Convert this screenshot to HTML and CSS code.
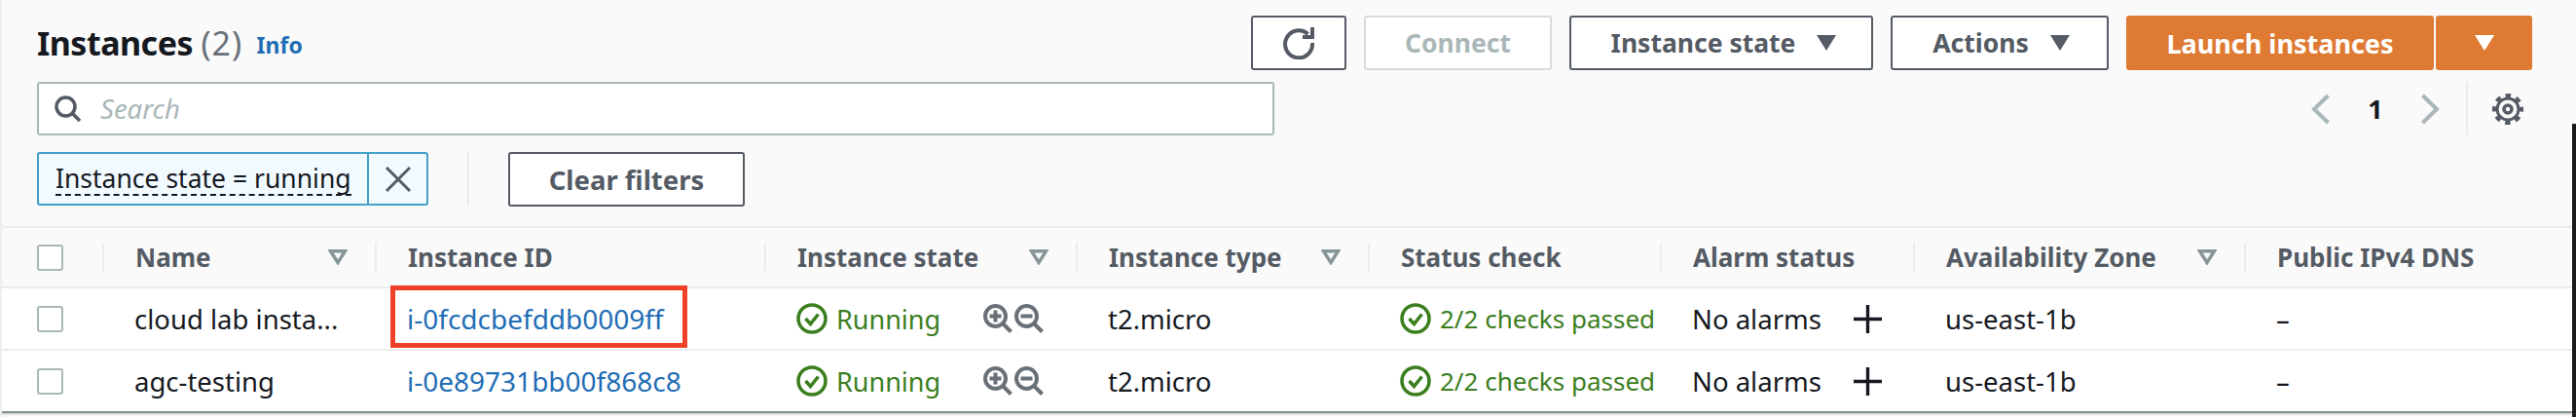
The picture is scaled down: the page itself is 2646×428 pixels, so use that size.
FILE: index.html
```html
<!DOCTYPE html>
<html lang="en">
<head>
    <meta charset="UTF-8">
    <title>Instances</title>
    <link rel="stylesheet" href="styles.css">
</head>
<body>
    <svg class="sprites" width="0" height="0">
        <symbol id="ok" viewBox="0 0 32 32">
            <circle cx="16" cy="16" r="14" fill="none" stroke="currentColor" stroke-width="3.500"/>
            <path d="M9.500 16l5 5.500 8-10" fill="none" stroke="currentColor" stroke-width="3.500"/>
        </symbol>
        <symbol id="sort" viewBox="0 0 20 16">
            <path d="M2.500 1.700h15L10 13.500z" fill="none" stroke="#879596" stroke-width="3.400"/>
        </symbol>
        <symbol id="zoom-in" viewBox="0 0 30 30">
            <circle cx="12.500" cy="12.500" r="10.500" fill="none" stroke="#687078" stroke-width="4"/>
            <path d="M20 20l8.500 8.500" stroke="#687078" stroke-width="4"/>
            <path d="M6.500 12.500h12M12.500 6.500v12" stroke="#687078" stroke-width="4"/>
        </symbol>
        <symbol id="zoom-out" viewBox="0 0 30 30">
            <circle cx="12.500" cy="12.500" r="10.500" fill="none" stroke="#687078" stroke-width="4"/>
            <path d="M20 20l8.500 8.500" stroke="#687078" stroke-width="4"/>
            <path d="M6.500 12.500h12" stroke="#687078" stroke-width="4"/>
        </symbol>
        <symbol id="plus" viewBox="0 0 30 30">
            <path d="M0 15h30M15 0v30" stroke="#16191f" stroke-width="3.500"/>
        </symbol>
    </svg>

    <section class="top">
        <div class="title-row">
            <h1>Instances <span class="count">(2)</span> <a class="info">Info</a></h1>
            <div class="actions">
                <button class="btn btn-icon">
                    <svg width="34" height="34" viewBox="0 0 34 34"><path d="M26.500 8A14 14 0 1 0 31 17" fill="none" stroke="currentColor" stroke-width="4"/><path d="M21 11h10V1" fill="none" stroke="currentColor" stroke-width="4"/></svg>
                </button>
                <button class="btn btn-off">Connect</button>
                <button class="btn btn-state">Instance state <i class="caret"></i></button>
                <button class="btn btn-actions">Actions <i class="caret"></i></button>
                <button class="btn btn-main">Launch instances</button>
                <button class="btn btn-main btn-split"><i class="caret"></i></button>
            </div>
        </div>

        <div class="search-row">
            <div class="search">
                <svg width="30" height="30" viewBox="0 0 30 30"><circle cx="12.500" cy="12.500" r="9.500" fill="none" stroke="#545b64" stroke-width="3.500"/><path d="M19 19l8 8" stroke="#545b64" stroke-width="3.500"/></svg>
                <span>Search</span>
            </div>
            <div class="pager">
                <svg width="22" height="32" viewBox="0 0 22 32"><path d="M18.500 2L4 16l14.500 14" fill="none" stroke="#aab7b8" stroke-width="4"/></svg>
                <span class="page">1</span>
                <svg width="22" height="32" viewBox="0 0 22 32"><path d="M3.500 2L18 16 3.500 30" fill="none" stroke="#aab7b8" stroke-width="4"/></svg>
                <div class="gear">
                    <svg width="32" height="32" viewBox="0 0 32 32"><circle cx="16" cy="16" r="11" fill="none" stroke="#545b64" stroke-width="3"/><circle cx="16" cy="16" r="13.500" fill="none" stroke="#545b64" stroke-width="5" stroke-dasharray="5.300 5.300" stroke-dashoffset="2.650"/><circle cx="16" cy="16" r="4" fill="none" stroke="#545b64" stroke-width="3.500"/></svg>
                </div>
            </div>
        </div>

        <div class="filter-row">
            <div class="token">
                <span class="token-text"><span>Instance state = running</span></span>
                <span class="token-close">
                    <svg width="28" height="28" viewBox="0 0 28 28"><path d="M2 2l24 24M26 2L2 26" stroke="#545b64" stroke-width="3"/></svg>
                </span>
            </div>
            <div class="sep"></div>
            <button class="btn btn-clear">Clear filters</button>
        </div>
    </section>

    <table>
        <colgroup>
            <col class="c-check"><col class="c-name"><col class="c-id"><col class="c-state"><col class="c-type"><col class="c-status"><col class="c-alarm"><col class="c-zone"><col>
        </colgroup>
        <thead>
            <tr>
                <th><i class="box"></i></th>
                <th><div class="th-in">Name <svg class="sort" width="20" height="16"><use href="#sort"/></svg></div></th>
                <th><div class="th-in">Instance ID</div></th>
                <th><div class="th-in">Instance state <svg class="sort" width="20" height="16"><use href="#sort"/></svg></div></th>
                <th><div class="th-in">Instance type <svg class="sort" width="20" height="16"><use href="#sort"/></svg></div></th>
                <th><div class="th-in">Status check</div></th>
                <th><div class="th-in">Alarm status</div></th>
                <th><div class="th-in">Availability Zone <svg class="sort" width="20" height="16"><use href="#sort"/></svg></div></th>
                <th><div class="th-in">Public IPv4 DNS</div></th>
            </tr>
        </thead>
        <tbody>
            <tr>
                <td><i class="box"></i></td>
                <td>cloud lab insta...</td>
                <td class="marked"><a>i-0fcdcbefddb0009ff</a><div class="redbox"></div></td>
                <td><div class="cell-state"><span class="ok"><svg width="32" height="32"><use href="#ok"/></svg>Running</span><span class="zooms"><svg width="30" height="30"><use href="#zoom-in"/></svg><svg width="30" height="30"><use href="#zoom-out"/></svg></span></div></td>
                <td>t2.micro</td>
                <td class="checks"><span class="ok"><svg width="32" height="32"><use href="#ok"/></svg>2/2 checks passed</span></td>
                <td><div class="cell-alarm">No alarms <svg width="29" height="29"><use href="#plus"/></svg></div></td>
                <td>us-east-1b</td>
                <td>–</td>
            </tr>
            <tr>
                <td><i class="box"></i></td>
                <td>agc-testing</td>
                <td><a>i-0e89731bb00f868c8</a></td>
                <td><div class="cell-state"><span class="ok"><svg width="32" height="32"><use href="#ok"/></svg>Running</span><span class="zooms"><svg width="30" height="30"><use href="#zoom-in"/></svg><svg width="30" height="30"><use href="#zoom-out"/></svg></span></div></td>
                <td>t2.micro</td>
                <td class="checks"><span class="ok"><svg width="32" height="32"><use href="#ok"/></svg>2/2 checks passed</span></td>
                <td><div class="cell-alarm">No alarms <svg width="29" height="29"><use href="#plus"/></svg></div></td>
                <td>us-east-1b</td>
                <td>–</td>
            </tr>
        </tbody>
    </table>
    <div class="edge-left"></div>
    <div class="edge-right"></div>
</body>
</html>
```

FILE: styles.css
```css
body {
    margin: 0;
    height: 428px;
    overflow: hidden;
    background-color: #fafafa;
    color: #16191f;
    font-family: "Noto Sans", Arial, sans-serif;
    font-size: 27.5px;
}

.sprites {
    position: absolute;
}

/* bordi dello screenshot */
.edge-left {
    position: absolute;
    left: 0;
    top: 0;
    width: 2px;
    height: 428px;
    background-color: #eeeeee;
}

.edge-right {
    position: absolute;
    right: 0;
    top: 127px;
    width: 4px;
    height: 301px;
    background-color: #1a1a1a;
}

.top {
    padding: 16px 45px 0 38px;
}

.title-row {
    display: flex;
    justify-content: space-between;
    height: 56px;
}

h1 {
    margin: 0;
    font-size: 34px;
    font-weight: 700;
    line-height: 56px;
    letter-spacing: -0.5px;
}

.count {
    font-weight: 400;
    color: #687078;
    letter-spacing: 1px;
}

.info {
    margin-left: 6px;
    font-size: 23px;
    font-weight: 700;
    letter-spacing: 0;
    vertical-align: 2px;
    color: #1f6db5;
}

.actions {
    display: flex;
    gap: 18px;
}

.btn {
    height: 56px;
    padding: 0;
    border: 2px solid #545b64;
    border-radius: 3px;
    background-color: #fff;
    color: #545b64;
    font-family: inherit;
    font-size: 26.5px;
    font-weight: 700;
    display: flex;
    align-items: center;
    justify-content: center;
    gap: 22px;
}

.btn-icon { width: 98px; }
.btn-off { width: 193px; border-color: #d5dbdb; color: #aab7b8; }
.btn-state { width: 312px; padding-left: 5px; }
.btn-actions { width: 224px; padding-left: 3px; }

.btn-main {
    width: 316px;
    border-color: #df7a33;
    background-color: #df7a33;
    color: #fff;
    font-size: 27px;
}

.btn-split {
    width: 99px;
    margin-left: -16px;
}

.caret {
    width: 0;
    height: 0;
    border-left: 10.500px solid transparent;
    border-right: 10.500px solid transparent;
    border-top: 16px solid currentColor;
}

.search-row {
    display: flex;
    justify-content: space-between;
    margin-top: 12px;
    height: 55px;
}

.search {
    width: 1271px;
    box-sizing: border-box;
    padding-left: 15px;
    display: flex;
    align-items: center;
    gap: 18px;
    border: 2px solid #aab7b8;
    border-radius: 3px;
    background-color: #fff;
    color: #aab7b8;
    font-style: italic;
}

.pager {
    display: flex;
    align-items: center;
}

.page {
    width: 90px;
    text-align: center;
    font-size: 27px;
    font-weight: 700;
}

.gear {
    margin-left: 26px;
    padding: 0 9px 0 25px;
    height: 55px;
    display: flex;
    align-items: center;
    border-left: 2px solid #eaeded;
}

.filter-row {
    display: flex;
    margin-top: 17px;
    height: 55px;
}

.token {
    width: 402px;
    box-sizing: border-box;
    display: flex;
    border: 2px solid #44a0c6;
    border-radius: 3px;
    background-color: #f1faff;
}

.token-text {
    width: 339px;
    padding-left: 17px;
    box-sizing: border-box;
    display: flex;
    align-items: center;
    border-right: 2px solid #44a0c6;
    font-size: 26.5px;
    white-space: nowrap;
}

.token-text span {
    border-bottom: 2px dashed #16191f;
    line-height: 32px;
}

.token-close {
    flex: 1;
    display: flex;
    align-items: center;
    justify-content: center;
}

.sep {
    width: 2px;
    margin-left: 40px;
    background-color: #eaeded;
}

.btn-clear {
    width: 243px;
    margin-left: 40px;
    font-size: 27.5px;
}

table {
    position: absolute;
    top: 232px;
    left: 0;
    width: 2642px;
    table-layout: fixed;
    border-collapse: collapse;
    box-shadow: 0 1px 2px rgba(84, 91, 100, 0.35);
}

.c-check { width: 105px; }
.c-name { width: 280px; }
.c-id { width: 400px; }
.c-state { width: 320px; }
.c-type { width: 300px; }
.c-status { width: 300px; }
.c-alarm { width: 260px; }
.c-zone { width: 340px; }

thead tr {
    border-top: 2px solid #eaeded;
    border-bottom: 2px solid #eaeded;
}

th {
    height: 60px;
    padding: 0;
    text-align: left;
    color: #545b64;
    font-size: 26px;
    font-weight: 700;
}

.th-in {
    height: 30px;
    padding: 0 28px 0 32px;
    display: flex;
    align-items: center;
    justify-content: space-between;
    border-left: 2px solid #eaeded;
}

th:first-child, td:first-child {
    padding-left: 38px;
}

td {
    height: 62px;
    padding: 0 0 0 33px;
    white-space: nowrap;
    background-color: #fff;
}

tbody tr {
    border-bottom: 2px solid #eaeded;
}

tbody tr:last-child {
    border-bottom: 2px solid #879596;
}

.box {
    display: block;
    width: 27px;
    height: 27px;
    box-sizing: border-box;
    border: 2px solid #aab7b8;
    border-radius: 3px;
    background-color: #fff;
}

td a {
    font-size: 28px;
    color: #1f6db5;
}

.marked {
    position: relative;
}

.redbox {
    position: absolute;
    left: 16px;
    top: -3px;
    width: 305px;
    height: 64px;
    box-sizing: border-box;
    border: 5px solid #ee4127;
}

.ok {
    display: flex;
    align-items: center;
    gap: 9px;
    font-size: 27px;
    color: #3b7e1e;
}

.ok svg {
    flex-shrink: 0;
}

.cell-state {
    display: flex;
    align-items: center;
    gap: 44px;
}

.zooms {
    display: flex;
    gap: 2px;
}

.checks .ok {
    font-size: 26px;
}

.cell-alarm {
    display: flex;
    align-items: center;
    gap: 33px;
}
```
